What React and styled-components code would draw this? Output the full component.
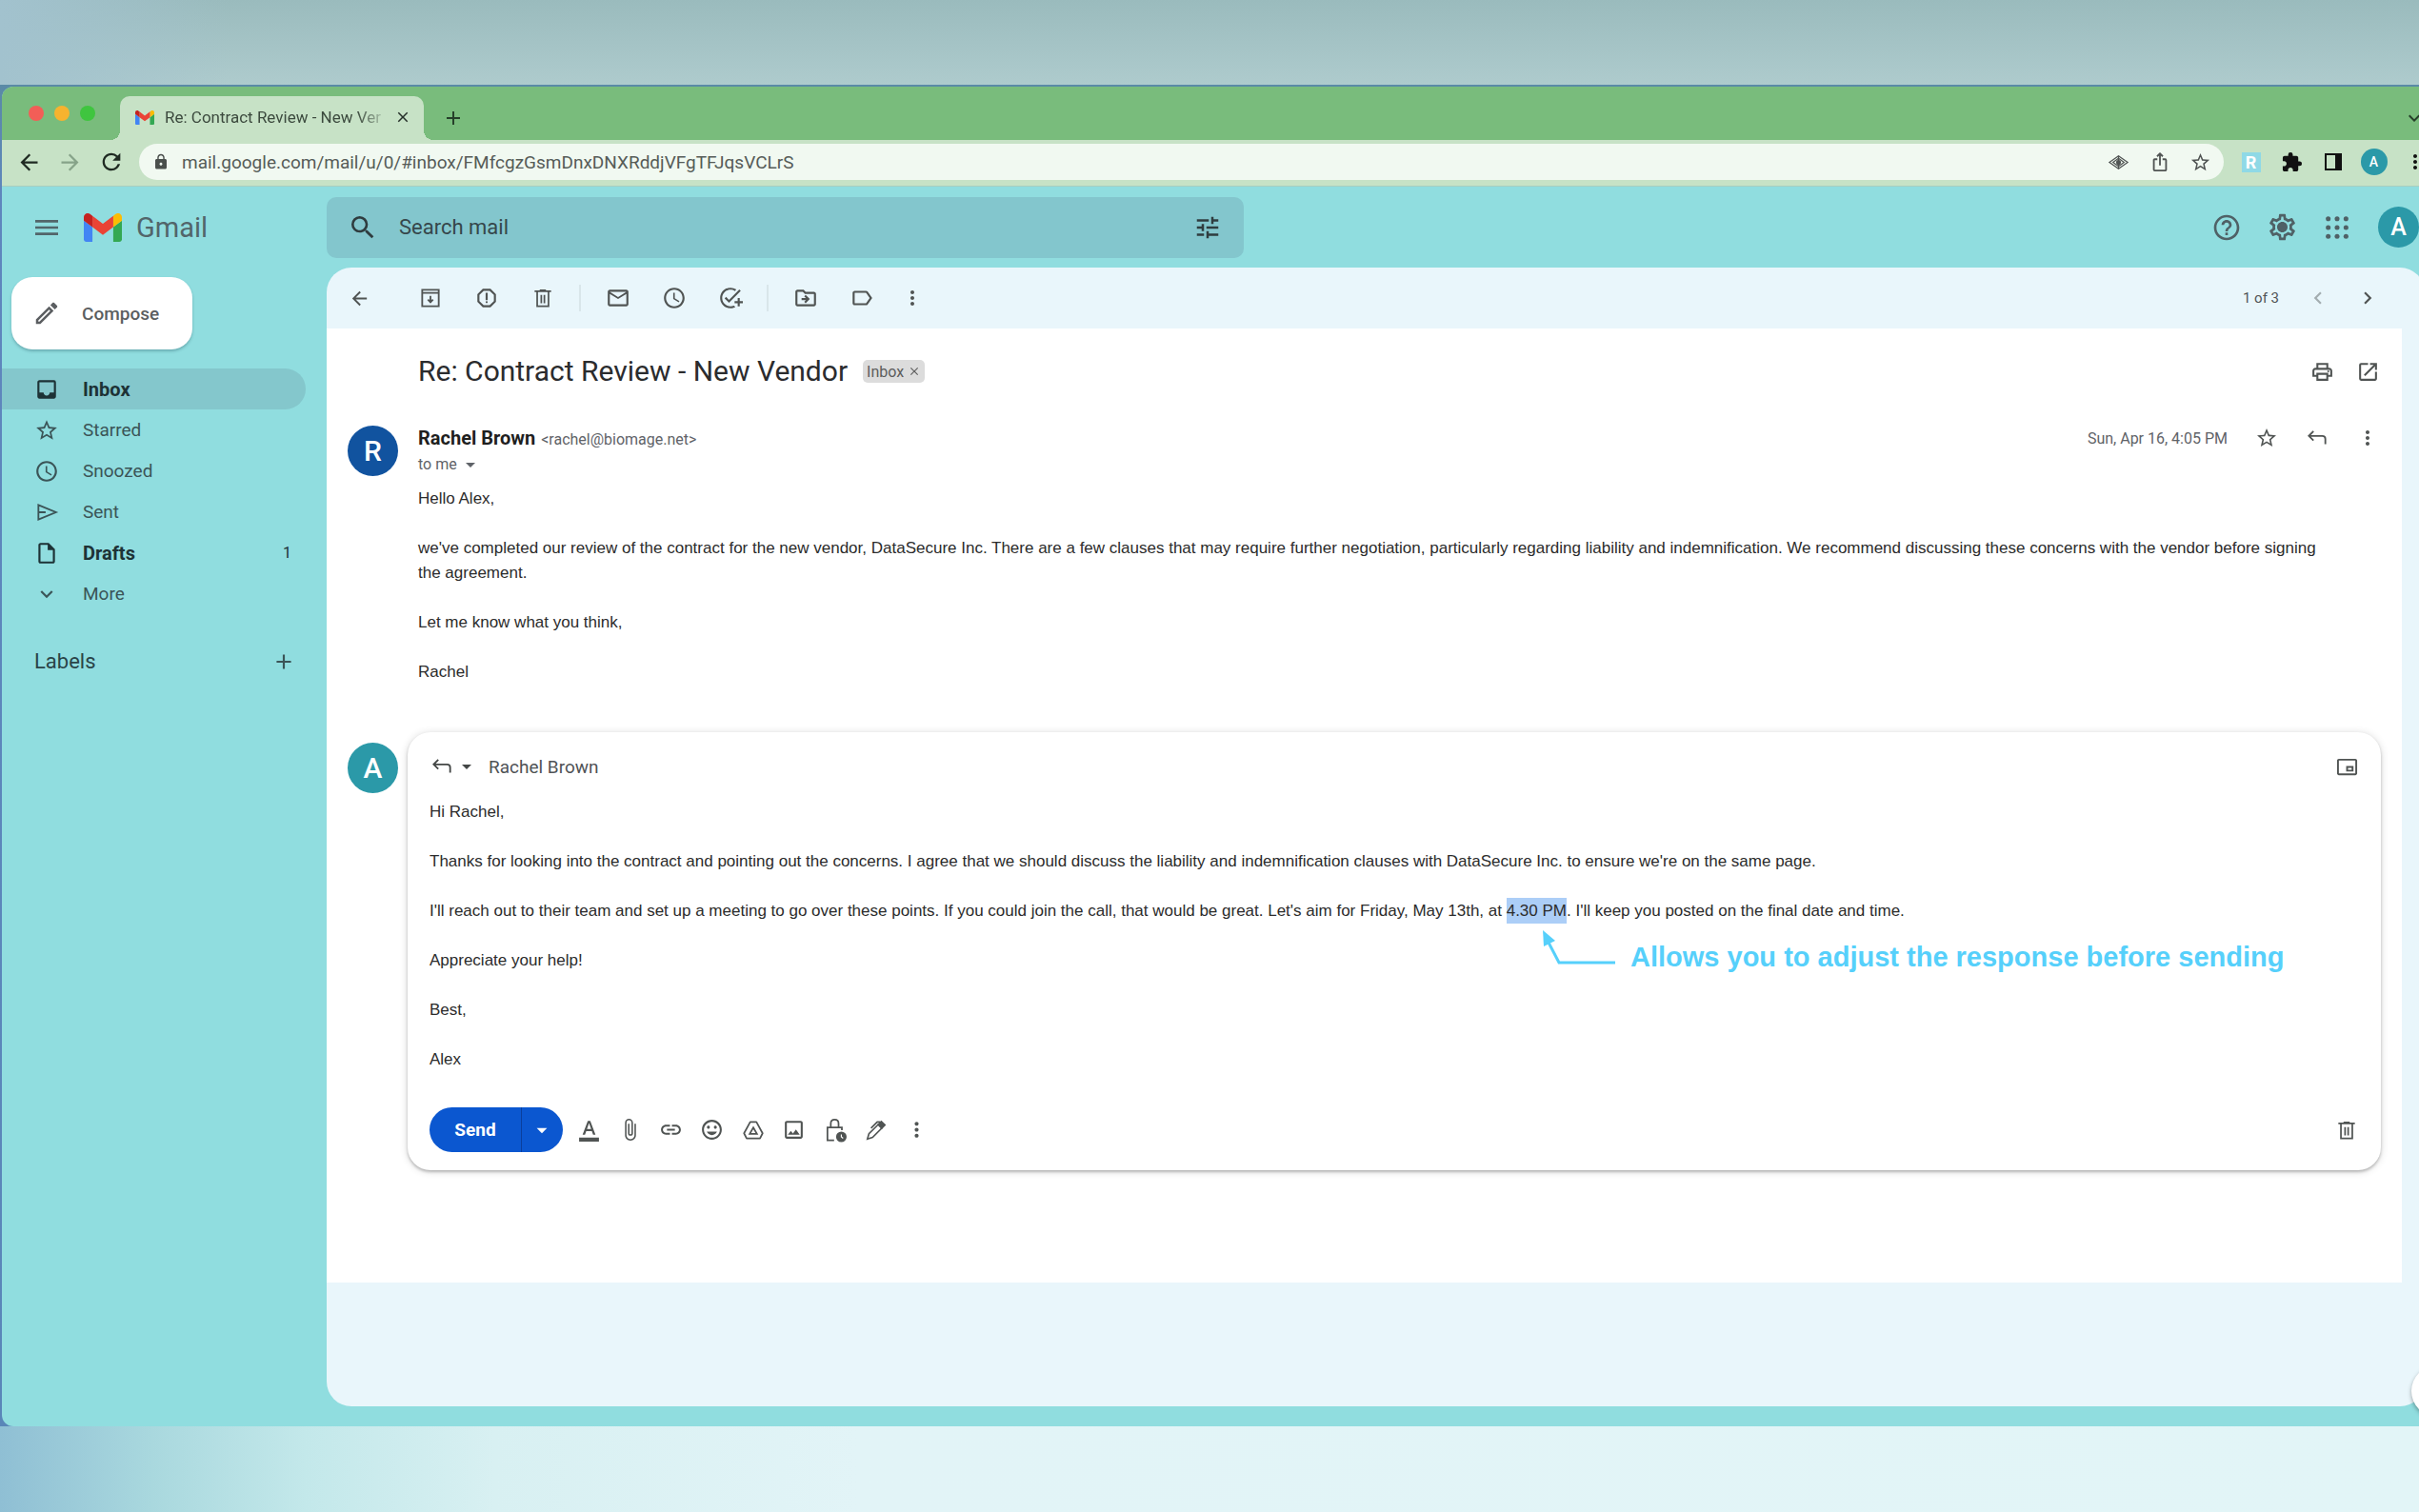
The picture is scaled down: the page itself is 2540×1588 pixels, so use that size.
import React from "react";
import styled, { createGlobalStyle, css } from "styled-components";
import {
  MdMenu, MdSearch, MdTune, MdHelpOutline, MdOutlineSettings, MdArrowBack, MdArrowForward,
  MdRefresh, MdLock, MdIosShare, MdStarBorder, MdExtension, MdMoreVert, MdExpandMore, MdAdd,
  MdClose, MdOutlineEdit, MdInbox, MdAccessTime, MdOutlineInsertDriveFile,
  MdOutlineReport, MdMailOutline, MdAddTask, MdOutlineDriveFileMove, MdLabelOutline,
  MdChevronLeft, MdChevronRight, MdOutlinePrint, MdOpenInNew, MdArrowDropDown,
  MdOutlinePictureInPictureAlt, MdAttachFile, MdLink,
  MdOutlineInsertEmoticon, MdOutlineImage, MdFormatColorText,
} from "react-icons/md";

const ui = '"Roboto", "Noto Sans", sans-serif';
const mailFont = '"Liberation Sans", Arial, sans-serif';

const Global = createGlobalStyle`
  *, *::before, *::after { box-sizing: border-box; }
  body { margin: 0; font-family: ${ui}; color: #202124; }
  button, input { font: inherit; color: inherit; border: 0; background: none; padding: 0; margin: 0; }
  button { cursor: pointer; }
  h1, h2, p, ul { margin: 0; padding: 0; font-weight: 400; }
  ul { list-style: none; }
  svg { display: block; flex: none; }
`;

const Backdrop = styled.div`
  min-height: 100vh;
  display: flex;
  flex-direction: column;
  overflow: hidden;
  padding: 89px 0 90px;
  background:
    linear-gradient(90deg, #a2c2ce 0, rgba(162, 194, 206, 0) 240px) top / 100% 89px no-repeat,
    linear-gradient(180deg, #9abbbd, #aecbcd) top / 100% 89px no-repeat,
    linear-gradient(90deg, #8fbfd4 0, #a9d8de 160px, #c3e8ea 320px, #d8f0f2 520px, #e2f4f7 900px, #e2f5f7 100%);
`;

const Desktop = styled.div`
  flex: 1;
  display: flex;
  flex-direction: column;
  background: linear-gradient(180deg, #5a8aa6, #5f86bd 120px, #5a86b8);
  padding: 2px 0 0 2px;
`;

const BrowserWindow = styled.div`
  position: relative;
  flex: 1;
  display: flex;
  flex-direction: column;
  overflow: hidden;
  border-radius: 12px 0 0 12px;
  background: #90dddf;
`;

const TabStrip = styled.div`
  display: flex;
  align-items: flex-end;
  height: 56px;
  background: #79bc7c;
`;

const Lights = styled.div`
  display: flex;
  gap: 11px;
  width: 124px;
  height: 56px;
  padding: 20px 0 0 28px;
`;

const Light = styled.button`
  width: 16px;
  height: 16px;
  border-radius: 50%;
  background: ${(p) => p.$color};
`;

const Tab = styled.div`
  position: relative;
  display: flex;
  align-items: center;
  width: 319px;
  height: 46px;
  padding: 0 12px 2px 16px;
  gap: 11px;
  border-radius: 10px 10px 0 0;
  background: #c7e2c6;
  font-size: 17px;
  color: #3c4a3e;
  &::before, &::after {
    content: "";
    position: absolute;
    bottom: 0;
    width: 10px;
    height: 10px;
  }
  &::before { left: -10px; background: radial-gradient(circle at 0 0, transparent 10px, #c7e2c6 10px); }
  &::after { right: -10px; background: radial-gradient(circle at 100% 0, transparent 10px, #c7e2c6 10px); }
`;

const TabTitle = styled.span`
  flex: 1;
  white-space: nowrap;
  mask-image: linear-gradient(90deg, #000 88%, rgba(0, 0, 0, 0.2));
`;

const IconButton = styled.button`
  display: flex;
  flex: none;
  align-items: center;
  justify-content: center;
  width: ${(p) => p.$w || 43}px;
  height: ${(p) => p.$h || 39}px;
  color: ${(p) => p.$color || "#505453"};
`;

const NewTab = styled(IconButton)`
  margin: 0 auto 4px 9px;
`;

const TabMenu = styled(IconButton)`
  margin: 0 -16px 4px 0;
`;

const AddressBar = styled.div`
  display: flex;
  align-items: center;
  height: 49px;
  padding: 0 0 2px 7px;
  background: #c7e2c6;
  border-bottom: 1px solid #a9cfc0;
`;

const UrlPill = styled.label`
  display: flex;
  flex: 1;
  align-items: center;
  height: 38px;
  margin: 0 7px 0 8px;
  padding: 0 3px 0 14px;
  gap: 13px;
  border-radius: 20px;
  background: #f1f9f1;
  color: #4a4f4c;
`;

const UrlInput = styled.input`
  flex: 1;
  min-width: 0;
  font-size: 19px;
  color: #565c58;
  outline: none;
`;

const PageActions = styled.div`
  display: flex;
`;

const Extensions = styled.div`
  display: flex;
  margin-right: -17px;
`;

const RTile = styled.span`
  width: 20px;
  height: 21px;
  background: #8fd9e6;
  color: #fff;
  font-size: 18px;
  font-weight: 700;
  line-height: 21px;
  text-align: center;
`;

const Avatar = styled.span`
  display: flex;
  flex: none;
  align-items: center;
  justify-content: center;
  width: ${(p) => p.$size}px;
  height: ${(p) => p.$size}px;
  border-radius: 50%;
  background: ${(p) => p.$color || "#2b99a8"};
  color: #fff;
  font-size: ${(p) => p.$font}px;
  font-weight: 500;
`;

const AppHeader = styled.header`
  display: flex;
  align-items: center;
  height: 85px;
  color: #5f6368;
`;

const Brand = styled.div`
  display: flex;
  align-items: center;
  width: 341px;
  padding-left: 30px;
`;

const BrandName = styled.span`
  margin-left: 15px;
  font-size: 29px;
  color: #52656a;
`;

const LogoLink = styled.a`
  display: flex;
  align-items: center;
  margin-left: 22px;
  text-decoration: none;
`;

const SearchBox = styled.label`
  display: flex;
  align-items: center;
  flex: 0 1 963px;
  height: 64px;
  padding: 0 22px;
  gap: 22px;
  border-radius: 10px;
  background: #83c6cd;
  color: #2f3c3f;
`;

const SearchInput = styled.input`
  flex: 1;
  min-width: 0;
  font-size: 22px;
  outline: none;
  &::placeholder { color: #36474b; opacity: 1; }
`;

const HeaderTools = styled.div`
  display: flex;
  align-items: center;
  margin-left: auto;
`;

const AccountButton = styled(IconButton)`
  margin-left: 14px;
`;

const Workspace = styled.div`
  display: flex;
  flex: 1;
`;

const Sidebar = styled.nav`
  flex: 0 0 341px;
  padding-top: 10px;
`;

const Compose = styled.button`
  display: flex;
  align-items: center;
  width: 190px;
  height: 76px;
  margin: 0 0 20px 10px;
  padding-left: 22px;
  gap: 22px;
  border-radius: 22px;
  background: #fff;
  box-shadow: 0 2px 3px rgba(40, 90, 100, 0.35);
  font-size: 19px;
  font-weight: 500;
  color: #5b5e61;
`;

const NavLink = styled.a`
  display: flex;
  align-items: center;
  height: 43px;
  width: 319px;
  padding: 0 15px 0 34px;
  gap: 25px;
  border-radius: 0 22px 22px 0;
  font-size: 19px;
  color: #3b5457;
  text-decoration: none;
  svg { width: 26px; height: 26px; }
  ${(p) => p.$bold && css`
    font-size: 20px;
    font-weight: 700;
    color: #1d3236;
  `}
  ${(p) => p.$active && css`
    background: #84c7cc;
  `}
`;

const Count = styled.span`
  margin-left: auto;
  font-size: 16px;
  font-weight: 400;
`;

const LabelsHead = styled.div`
  display: flex;
  align-items: center;
  justify-content: space-between;
  height: 43px;
  width: 319px;
  margin-top: 28px;
  padding: 0 2px 0 34px;
  h2 { font-size: 22px; color: #2a4448; }
`;

const Panel = styled.main`
  flex: 1;
  min-width: 0;
  display: flex;
  flex-direction: column;
  overflow: hidden;
  margin: 0 -6px 21px 0;
  border-radius: 26px;
  background: #e9f6fb;
`;

const Toolbar = styled.div`
  display: flex;
  align-items: center;
  height: 64px;
  padding: 0 34px 0 5px;
`;

const BackButton = styled(IconButton)`
  margin-right: 15px;
`;

const Divider = styled.span`
  width: 2px;
  height: 28px;
  margin: 0 9px;
  background: #d9e6ea;
`;

const Pager = styled.div`
  display: flex;
  align-items: center;
  margin-left: auto;
  font-size: 15px;
  color: #505356;
  span { margin-right: 15px; }
`;

const Thread = styled.div`
  margin-right: 24px;
  padding-bottom: 118px;
  background: #fff;
`;

const SubjectRow = styled.div`
  display: flex;
  align-items: center;
  height: 90px;
  padding: 0 12px 0 96px;
`;

const Subject = styled.h1`
  font-size: 30px;
  line-height: 40px;
  color: #2b2c2e;
`;

const Chip = styled.span`
  display: flex;
  align-items: center;
  gap: 4px;
  height: 24px;
  margin: 0 auto 0 16px;
  padding: 0 4px;
  border-radius: 5px;
  background: #dcdcdc;
  font-size: 16px;
  color: #5d5d5d;
`;

const Message = styled.article`
  display: grid;
  grid-template-columns: 74px 1fr;
  padding: 12px 10px 0 22px;
`;

const MessageHead = styled.div`
  display: flex;
  align-items: flex-start;
  justify-content: space-between;
  height: 64px;
`;

const Sender = styled.div`
  line-height: 26px;
  font-size: 16px;
  color: #5f6368;
  strong {
    margin-right: 6px;
    font-size: 20px;
    color: #1f1f1f;
  }
`;

const Recipient = styled.button`
  display: flex;
  align-items: center;
  gap: 2px;
  height: 26px;
`;

const Meta = styled.div`
  display: flex;
  align-items: center;
  height: 26px;
  font-size: 16px;
  color: #5f6368;
  time { margin-right: 14px; }
`;

const MailText = styled.div`
  display: flex;
  flex-direction: column;
  gap: 26px;
  padding-right: 60px;
  font-family: ${mailFont};
  font-size: 17px;
  line-height: 26px;
  color: #2c2c2c;
  outline: none;
  mark {
    padding: 4px 0;
    background: #accef7;
    color: inherit;
  }
`;

const Reply = styled.section`
  display: grid;
  grid-template-columns: 63px 1fr;
  padding: 50px 22px 0 22px;
  > span { margin-top: 11px; }
`;

const ReplyCard = styled.form`
  position: relative;
  padding: 16px 12px 19px 23px;
  border-radius: 24px;
  background: #fff;
  box-shadow: 0 2px 3px rgba(0, 0, 0, 0.22), 0 1px 8px rgba(0, 0, 0, 0.16);
`;

const ReplyHead = styled.div`
  display: flex;
  align-items: center;
  height: 40px;
  margin-bottom: 15px;
  font-size: 19px;
  color: #505356;
`;

const ReplyType = styled.button`
  display: flex;
  align-items: center;
  gap: 1px;
  margin-right: 11px;
  color: #444746;
`;

const Spacer = styled.span`
  flex: 1;
`;

const Actions = styled.div`
  display: flex;
  align-items: center;
  margin-top: 37px;
`;

const SendGroup = styled.div`
  display: flex;
  height: 47px;
  margin-right: 6px;
  overflow: hidden;
  border-radius: 24px;
  background: #0b57d0;
  color: #fff;
`;

const SendButton = styled.button`
  width: 97px;
  font-size: 19px;
  font-weight: 700;
  border-right: 1px solid #0a3f9c;
`;

const SendMore = styled.button`
  display: flex;
  align-items: center;
  width: 43px;
  padding-left: 8px;
`;

const Callout = styled.div`
  position: absolute;
  top: 207px;
  left: 1191px;
  display: flex;
  gap: 15px;
  color: #56d0fb;
  pointer-events: none;
  span {
    margin-top: 12px;
    font-family: ${mailFont};
    font-size: 29px;
    font-weight: 700;
    line-height: 34px;
    white-space: nowrap;
  }
`;

const SideToggle = styled.button`
  position: absolute;
  right: -46px;
  bottom: 10px;
  width: 54px;
  height: 54px;
  border-radius: 50%;
  background: #fff;
  box-shadow: 0 2px 4px rgba(0, 0, 0, 0.35);
`;

const Line = ({ size = 26, width = 2, children }) => (
  <svg width={size} height={size} viewBox="0 0 24 24" fill="none" stroke="currentColor" strokeWidth={width} aria-hidden="true">
    {children}
  </svg>
);

const GmailMark = ({ width, height }) => (
  <svg width={width} height={height} viewBox="52 42 88 66" aria-hidden="true">
    <path fill="#4285f4" d="M58 108h14V74L52 59v43c0 3.32 2.69 6 6 6" />
    <path fill="#34a853" d="M120 108h14c3.32 0 6-2.69 6-6V59l-20 15" />
    <path fill="#fbbc04" d="M120 48v26l20-15v-8c0-7.42-8.47-11.65-14.4-7.2" />
    <path fill="#ea4335" d="M72 74V48l24 18 24-18v26L96 92" />
    <path fill="#c5221f" d="M52 51v8l20 15V48l-5.6-4.2c-5.94-4.45-14.4-.22-14.4 7.2" />
  </svg>
);

const ArchiveIcon = () => (
  <Line width={1.7}>
    <path d="M4 4h16v16H4zM4 7h16" />
    <path d="M12 10v6M9.5 13.5L12 16l2.5-2.5" />
  </Line>
);

const TrashIcon = () => (
  <Line width={1.6}>
    <path d="M4 5.5h16M9 4.5h6M6.5 6v14h11V6M10.5 9v8M13.5 9v8" />
  </Line>
);

const ReplyIcon = () => (
  <Line width={1.7}>
    <path d="M8.5 5.5L4 10l4.5 4.5M4.5 10H17q3 0 3 3v5" />
  </Line>
);

const SentIcon = () => (
  <Line width={1.7}>
    <path d="M4 5l17 7-17 7zM4 12h7" />
  </Line>
);

const AppsIcon = () => (
  <svg width="32" height="32" viewBox="0 0 24 24" fill="currentColor" aria-hidden="true">
    {[5, 12, 19].map((y) => [5, 12, 19].map((x) => <circle key={`${x}-${y}`} cx={x} cy={y} r="1.9" />))}
  </svg>
);

const GearIcon = () => (
  <svg width="33" height="33" viewBox="0 0 24 24" fill="currentColor" aria-hidden="true">
    <MdOutlineSettings size={24} />
    <circle cx="12" cy="12" r="3" />
  </svg>
);

const EyeIcon = () => (
  <Line size={23} width={1.3}>
    <path d="M2 12l10-7 10 7-10 7z" />
    <path d="M6 12l6-4.5 6 4.500-6 4.500z" />
    <path d="M12 5v14" />
    <circle cx="12" cy="12" r="2" fill="currentColor" />
  </Line>
);

const PanelIcon = () => (
  <Line size={24} width={2}>
    <path d="M4 4h16v16H4z" />
    <path d="M15 4h5v16h-5z" fill="currentColor" />
  </Line>
);

const DriveIcon = () => (
  <Line width={1.6}>
    <path strokeLinejoin="round" d="M9 4h6l6 11-2.5 5h-13L3 15z" />
    <path d="M12 9.5l3.5 6h-7z" />
  </Line>
);

const LockClockIcon = () => (
  <Line size={28} width={1.5}>
    <path d="M11 21H5V9.500h13V12M8 9.500V6q0-3.500 3.500-3.500T15 6v3.500" />
    <circle cx="17.5" cy="18" r="4" fill="currentColor" />
    <path d="M17.5 15.800V18l1.600 1.300" stroke="#fff" strokeWidth="1" />
  </Line>
);

const SignatureIcon = () => (
  <Line width={1.5}>
    <path d="M3.500 20.500l1.500-5L14 6.500l3.500 3.500L8.500 19z" />
    <path d="M14 6.500l3-3 3.500 3.500-3 3z" fill="currentColor" />
    <path d="M7 10l6-6h3" />
  </Line>
);

const navItems = [
  { name: "Inbox", Icon: MdInbox, active: true, bold: true },
  { name: "Starred", Icon: MdStarBorder },
  { name: "Snoozed", Icon: MdAccessTime },
  { name: "Sent", Icon: SentIcon },
  { name: "Drafts", Icon: MdOutlineInsertDriveFile, bold: true, count: 1 },
  { name: "More", Icon: MdExpandMore },
];

const toolGroups = [
  [["Archive", ArchiveIcon], ["Report spam", MdOutlineReport], ["Delete", TrashIcon]],
  [["Mark as unread", MdMailOutline], ["Snooze", MdAccessTime], ["Add to tasks", MdAddTask]],
  [["Move to", MdOutlineDriveFileMove], ["Labels", MdLabelOutline]],
];

const composeTools = [
  ["Formatting options", MdFormatColorText], ["Attach files", MdAttachFile], ["Insert link", MdLink],
  ["Insert emoji", MdOutlineInsertEmoticon], ["Insert from Drive", DriveIcon],
  ["Insert photo", MdOutlineImage], ["Confidential mode", LockClockIcon],
  ["Insert signature", SignatureIcon], ["More options", MdMoreVert],
];

const Tool = ({ label, icon: Icon, size = 26, ...rest }) => (
  <IconButton type="button" aria-label={label} {...rest}>
    <Icon size={size} />
  </IconButton>
);

function BrowserChrome() {
  return (
    <>
      <TabStrip>
        <Lights>
          <Light aria-label="Close window" $color="#f25e57" />
          <Light aria-label="Minimize window" $color="#f6b32f" />
          <Light aria-label="Zoom window" $color="#3fc53f" />
        </Lights>
        <Tab>
          <GmailMark width={20} height={15} />
          <TabTitle>Re: Contract Review - New Ver</TabTitle>
          <IconButton aria-label="Close tab" $w={20} $color="#26302a"><MdClose size={18} /></IconButton>
        </Tab>
        <NewTab aria-label="New tab" $color="#26402a"><MdAdd size={24} /></NewTab>
        <TabMenu aria-label="Search tabs" $color="#26402a"><MdExpandMore size={24} /></TabMenu>
      </TabStrip>
      <AddressBar>
        <Tool label="Back" icon={MdArrowBack} size={27} $color="#1f2a22" />
        <Tool label="Forward" icon={MdArrowForward} size={27} $color="#86a389" />
        <Tool label="Reload" icon={MdRefresh} size={28} $color="#1f2a22" />
        <UrlPill>
          <MdLock size={18} />
          <UrlInput aria-label="Address" defaultValue="mail.google.com/mail/u/0/#inbox/FMfcgzGsmDnxDNXRddjVFgTFJqsVCLrS" />
          <PageActions>
            <Tool label="Site visibility" icon={EyeIcon} />
            <Tool label="Share" icon={MdIosShare} size={22} />
            <Tool label="Bookmark" icon={MdStarBorder} size={23} />
          </PageActions>
        </UrlPill>
        <Extensions>
          <IconButton aria-label="R extension"><RTile>R</RTile></IconButton>
          <Tool label="Extensions" icon={MdExtension} size={23} $color="#111" />
          <Tool label="Side panel" icon={PanelIcon} $color="#111" />
          <IconButton aria-label="Profile"><Avatar $size={28} $font={14}>A</Avatar></IconButton>
          <Tool label="Browser menu" icon={MdMoreVert} size={24} $color="#111" />
        </Extensions>
      </AddressBar>
    </>
  );
}

function Header() {
  return (
    <AppHeader>
      <Brand>
        <Tool label="Main menu" icon={MdMenu} size={32} $w={34} $color="#52656a" />
        <LogoLink href="#inbox">
          <GmailMark width={40} height={30} />
          <BrandName>Gmail</BrandName>
        </LogoLink>
      </Brand>
      <SearchBox>
        <MdSearch size={32} />
        <SearchInput type="text" placeholder="Search mail" aria-label="Search mail" />
        <Tool label="Search options" icon={MdTune} size={30} $w={32} $color="#2f3c3f" />
      </SearchBox>
      <HeaderTools>
        <Tool label="Support" icon={MdHelpOutline} size={32} $w={58} $color="#4f6166" />
        <Tool label="Settings" icon={GearIcon} $w={58} $color="#4f6166" />
        <Tool label="Google apps" icon={AppsIcon} $w={58} $color="#4f6166" />
        <AccountButton aria-label="Account" $h={43}><Avatar $size={43} $font={25}>A</Avatar></AccountButton>
      </HeaderTools>
    </AppHeader>
  );
}

function SideNav() {
  return (
    <Sidebar>
      <Compose><MdOutlineEdit size={30} />Compose</Compose>
      <ul>
        {navItems.map(({ name, Icon, active, bold, count }) => (
          <li key={name}>
            <NavLink href={`#${name.toLowerCase()}`} $active={active} $bold={bold}>
              <Icon />
              {name}
              {count && <Count>{count}</Count>}
            </NavLink>
          </li>
        ))}
      </ul>
      <LabelsHead>
        <h2>Labels</h2>
        <Tool label="Create label" icon={MdAdd} size={26} $color="#3b5457" />
      </LabelsHead>
    </Sidebar>
  );
}

function ReplyComposer() {
  return (
    <Reply>
      <Avatar $size={53} $font={30}>A</Avatar>
      <ReplyCard onSubmit={(e) => e.preventDefault()}>
        <ReplyHead>
          <ReplyType type="button" aria-label="Type of response"><ReplyIcon /><MdArrowDropDown size={24} /></ReplyType>
          Rachel Brown
          <Spacer />
          <Tool label="Pop out reply" icon={MdOutlinePictureInPictureAlt} size={23} $w={48} />
        </ReplyHead>
        <MailText contentEditable suppressContentEditableWarning role="textbox" aria-label="Message body" spellCheck={false}>
          <p>Hi Rachel,</p>
          <p>Thanks for looking into the contract and pointing out the concerns. I agree that we should discuss the liability and indemnification clauses with DataSecure Inc. to ensure we're on the same page.</p>
          <p>I'll reach out to their team and set up a meeting to go over these points. If you could join the call, that would be great. Let's aim for Friday, May 13th, at <mark>4.30 PM</mark>. I'll keep you posted on the final date and time.</p>
          <p>Appreciate your help!</p>
          <p>Best,</p>
          <p>Alex</p>
        </MailText>
        <Actions>
          <SendGroup>
            <SendButton type="submit">Send</SendButton>
            <SendMore type="button" aria-label="More send options"><MdArrowDropDown size={26} /></SendMore>
          </SendGroup>
          {composeTools.map(([label, icon]) => <Tool key={label} label={label} icon={icon} size={25} />)}
          <Spacer />
          <Tool label="Discard draft" icon={TrashIcon} $w={48} />
        </Actions>
        <Callout>
          <svg width="78" height="38" viewBox="0 0 78 38" aria-hidden="true">
            <path d="M6 12L18 35H77" fill="none" stroke="currentColor" strokeWidth="3" />
            <path d="M1 1l1 17 12-6z" fill="currentColor" />
          </svg>
          <span>Allows you to adjust the response before sending</span>
        </Callout>
      </ReplyCard>
    </Reply>
  );
}

function Conversation() {
  return (
    <Panel>
      <Toolbar>
        <BackButton aria-label="Back to inbox" $w={59}><MdArrowBack size={23} /></BackButton>
        {toolGroups.map((group, i) => (
          <React.Fragment key={i}>
            {i > 0 && <Divider />}
            {group.map(([label, icon]) => <Tool key={label} label={label} icon={icon} $w={59} />)}
          </React.Fragment>
        ))}
        <Tool label="More" icon={MdMoreVert} size={24} $w={48} />
        <Pager>
          <span>1 of 3</span>
          <Tool label="Newer" icon={MdChevronLeft} $w={52} $color="#a3adb0" />
          <Tool label="Older" icon={MdChevronRight} $w={52} />
        </Pager>
      </Toolbar>
      <Thread>
        <SubjectRow>
          <Subject>Re: Contract Review - New Vendor</Subject>
          <Chip>Inbox <MdClose size={14} /></Chip>
          <Tool label="Print all" icon={MdOutlinePrint} size={25} $w={48} />
          <Tool label="In new window" icon={MdOpenInNew} size={25} $w={48} />
        </SubjectRow>
        <Message>
          <Avatar $size={53} $font={30} $color="#11539f">R</Avatar>
          <div>
            <MessageHead>
              <Sender>
                <strong>Rachel Brown</strong>&lt;rachel@biomage.net&gt;
                <Recipient>to me <MdArrowDropDown size={24} /></Recipient>
              </Sender>
              <Meta>
                <time>Sun, Apr 16, 4:05 PM</time>
                <Tool label="Star" icon={MdStarBorder} size={24} $w={53} />
                <Tool label="Reply" icon={ReplyIcon} $w={53} />
                <Tool label="More" icon={MdMoreVert} size={24} $w={53} />
              </Meta>
            </MessageHead>
            <MailText>
              <p>Hello Alex,</p>
              <p>we've completed our review of the contract for the new vendor, DataSecure Inc. There are a few clauses that may require further negotiation, particularly regarding liability and indemnification. We recommend discussing these concerns with the vendor before signing the agreement.</p>
              <p>Let me know what you think,</p>
              <p>Rachel</p>
            </MailText>
          </div>
        </Message>
        <ReplyComposer />
      </Thread>
    </Panel>
  );
}

export default function App() {
  return (
    <Backdrop>
      <Global />
      <Desktop>
        <BrowserWindow>
          <BrowserChrome />
          <Header />
          <Workspace>
            <SideNav />
            <Conversation />
          </Workspace>
          <SideToggle aria-label="Show side panel" />
        </BrowserWindow>
      </Desktop>
    </Backdrop>
  );
}
